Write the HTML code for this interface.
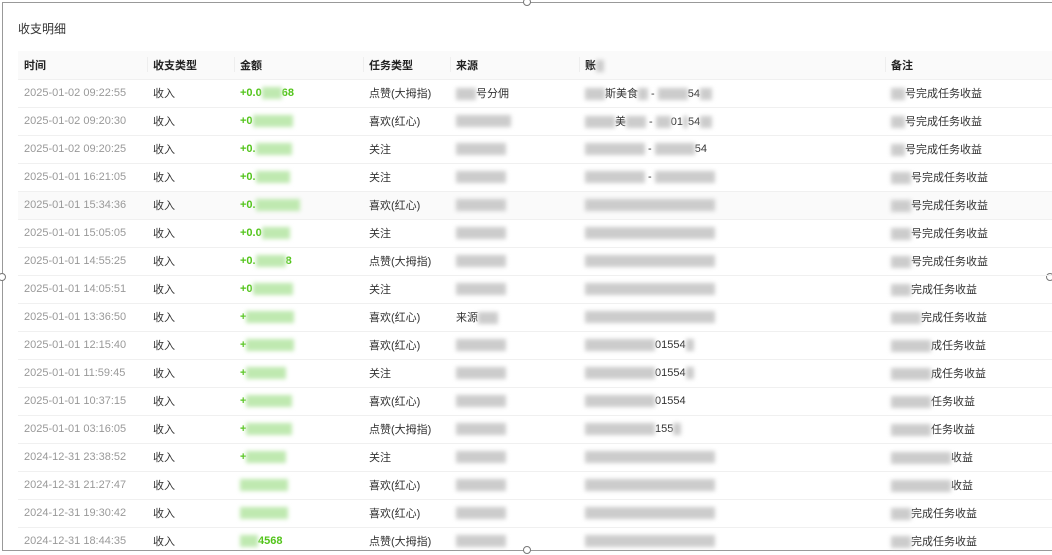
<!DOCTYPE html>
<html><head><meta charset="utf-8"><style>
*{margin:0;padding:0;box-sizing:border-box}
body{width:1052px;height:553px;overflow:hidden;background:#fff;font-family:"Liberation Sans","Noto Sans CJK SC",sans-serif;font-size:11px;color:#333;position:relative}
.frame{position:absolute;left:2px;top:2px;width:1060px;height:549px;border:1px solid #999}
.h{position:absolute;width:8px;height:8px;border:1px solid #777;border-radius:50%;background:#fff}
.title{position:absolute;left:18px;top:20px;font-size:12px;color:#333}
table{position:absolute;left:18px;top:51px;width:1040px;border-collapse:collapse;table-layout:fixed}
th{height:28px;background:#fafafa;text-align:left;font-weight:bold;padding-left:6px;position:relative;color:#222}
th+th:before{content:"";position:absolute;left:0;top:6px;height:15px;border-left:1px solid #eee}
td{height:28px;border-top:1px solid #f0f0f0;padding-left:6px;white-space:nowrap;overflow:hidden}
td.t{color:#999}
td.a{color:#52c41a;font-weight:bold}
tr.hv td{background:#fafafa}
.b{display:inline-block;height:12px;background:#ccc;filter:blur(2px);vertical-align:middle}
.g{display:inline-block;height:12px;background:#bfe9b0;filter:blur(2px);vertical-align:middle}
</style></head><body>
<div class="frame"></div>
<div class="h" style="left:523px;top:-2px"></div>
<div class="h" style="left:-2px;top:273px"></div>
<div class="h" style="left:1046px;top:273px"></div>
<div class="h" style="left:523px;top:546px"></div>
<div class="title">收支明细</div>
<table>
<colgroup><col style="width:129px"><col style="width:87px"><col style="width:129px"><col style="width:87px"><col style="width:129px"><col style="width:306px"><col style="width:173px"></colgroup>
<tr><th>时间</th><th>收支类型</th><th>金额</th><th>任务类型</th><th>来源</th><th>账<span class="b" style="width:8px"></span></th><th>备注</th></tr>
<tr><td class="t">2025-01-02 09:22:55</td><td>收入</td><td class="a">+0.0<span class="g" style="width:20px"></span>68</td><td>点赞(大拇指)</td><td><span class="b" style="width:20px"></span>号分佣</td><td><span class="b" style="width:20px"></span>斯美食<span class="b" style="width:10px"></span> - <span class="b" style="width:30px"></span>54<span class="b" style="width:12px"></span></td><td><span class="b" style="width:14px"></span>号完成任务收益</td></tr>
<tr><td class="t">2025-01-02 09:20:30</td><td>收入</td><td class="a">+0<span class="g" style="width:40px"></span></td><td>喜欢(红心)</td><td><span class="b" style="width:55px"></span></td><td><span class="b" style="width:30px"></span>美<span class="b" style="width:20px"></span> - <span class="b" style="width:15px"></span>01<span class="b" style="width:5px"></span>54<span class="b" style="width:12px"></span></td><td><span class="b" style="width:14px"></span>号完成任务收益</td></tr>
<tr><td class="t">2025-01-02 09:20:25</td><td>收入</td><td class="a">+0.<span class="g" style="width:36px"></span></td><td>关注</td><td><span class="b" style="width:50px"></span></td><td><span class="b" style="width:60px"></span> - <span class="b" style="width:40px"></span>54</td><td><span class="b" style="width:14px"></span>号完成任务收益</td></tr>
<tr><td class="t">2025-01-01 16:21:05</td><td>收入</td><td class="a">+0.<span class="g" style="width:34px"></span></td><td>关注</td><td><span class="b" style="width:50px"></span></td><td><span class="b" style="width:60px"></span> - <span class="b" style="width:60px"></span></td><td><span class="b" style="width:20px"></span>号完成任务收益</td></tr>
<tr class="hv"><td class="t">2025-01-01 15:34:36</td><td>收入</td><td class="a">+0.<span class="g" style="width:44px"></span></td><td>喜欢(红心)</td><td><span class="b" style="width:50px"></span></td><td><span class="b" style="width:130px"></span></td><td><span class="b" style="width:20px"></span>号完成任务收益</td></tr>
<tr><td class="t">2025-01-01 15:05:05</td><td>收入</td><td class="a">+0.0<span class="g" style="width:28px"></span></td><td>关注</td><td><span class="b" style="width:50px"></span></td><td><span class="b" style="width:130px"></span></td><td><span class="b" style="width:20px"></span>号完成任务收益</td></tr>
<tr><td class="t">2025-01-01 14:55:25</td><td>收入</td><td class="a">+0.<span class="g" style="width:30px"></span>8</td><td>点赞(大拇指)</td><td><span class="b" style="width:50px"></span></td><td><span class="b" style="width:130px"></span></td><td><span class="b" style="width:20px"></span>号完成任务收益</td></tr>
<tr><td class="t">2025-01-01 14:05:51</td><td>收入</td><td class="a">+0<span class="g" style="width:40px"></span></td><td>关注</td><td><span class="b" style="width:50px"></span></td><td><span class="b" style="width:130px"></span></td><td><span class="b" style="width:20px"></span>完成任务收益</td></tr>
<tr><td class="t">2025-01-01 13:36:50</td><td>收入</td><td class="a">+<span class="g" style="width:48px"></span></td><td>喜欢(红心)</td><td>来源<span class="b" style="width:20px"></span></td><td><span class="b" style="width:130px"></span></td><td><span class="b" style="width:30px"></span>完成任务收益</td></tr>
<tr><td class="t">2025-01-01 12:15:40</td><td>收入</td><td class="a">+<span class="g" style="width:48px"></span></td><td>喜欢(红心)</td><td><span class="b" style="width:50px"></span></td><td><span class="b" style="width:70px"></span>01554<span class="b" style="width:8px"></span></td><td><span class="b" style="width:40px"></span>成任务收益</td></tr>
<tr><td class="t">2025-01-01 11:59:45</td><td>收入</td><td class="a">+<span class="g" style="width:40px"></span></td><td>关注</td><td><span class="b" style="width:50px"></span></td><td><span class="b" style="width:70px"></span>01554<span class="b" style="width:8px"></span></td><td><span class="b" style="width:40px"></span>成任务收益</td></tr>
<tr><td class="t">2025-01-01 10:37:15</td><td>收入</td><td class="a">+<span class="g" style="width:46px"></span></td><td>喜欢(红心)</td><td><span class="b" style="width:50px"></span></td><td><span class="b" style="width:70px"></span>01554</td><td><span class="b" style="width:40px"></span>任务收益</td></tr>
<tr><td class="t">2025-01-01 03:16:05</td><td>收入</td><td class="a">+<span class="g" style="width:46px"></span></td><td>点赞(大拇指)</td><td><span class="b" style="width:50px"></span></td><td><span class="b" style="width:70px"></span>155<span class="b" style="width:8px"></span></td><td><span class="b" style="width:40px"></span>任务收益</td></tr>
<tr><td class="t">2024-12-31 23:38:52</td><td>收入</td><td class="a">+<span class="g" style="width:40px"></span></td><td>关注</td><td><span class="b" style="width:50px"></span></td><td><span class="b" style="width:130px"></span></td><td><span class="b" style="width:60px"></span>收益</td></tr>
<tr><td class="t">2024-12-31 21:27:47</td><td>收入</td><td class="a"><span class="g" style="width:48px"></span></td><td>喜欢(红心)</td><td><span class="b" style="width:50px"></span></td><td><span class="b" style="width:130px"></span></td><td><span class="b" style="width:60px"></span>收益</td></tr>
<tr><td class="t">2024-12-31 19:30:42</td><td>收入</td><td class="a"><span class="g" style="width:48px"></span></td><td>喜欢(红心)</td><td><span class="b" style="width:50px"></span></td><td><span class="b" style="width:130px"></span></td><td><span class="b" style="width:20px"></span>完成任务收益</td></tr>
<tr><td class="t">2024-12-31 18:44:35</td><td>收入</td><td class="a"><span class="g" style="width:18px"></span>4568</td><td>点赞(大拇指)</td><td><span class="b" style="width:50px"></span></td><td><span class="b" style="width:130px"></span></td><td><span class="b" style="width:20px"></span>完成任务收益</td></tr>
</table>
</body></html>
